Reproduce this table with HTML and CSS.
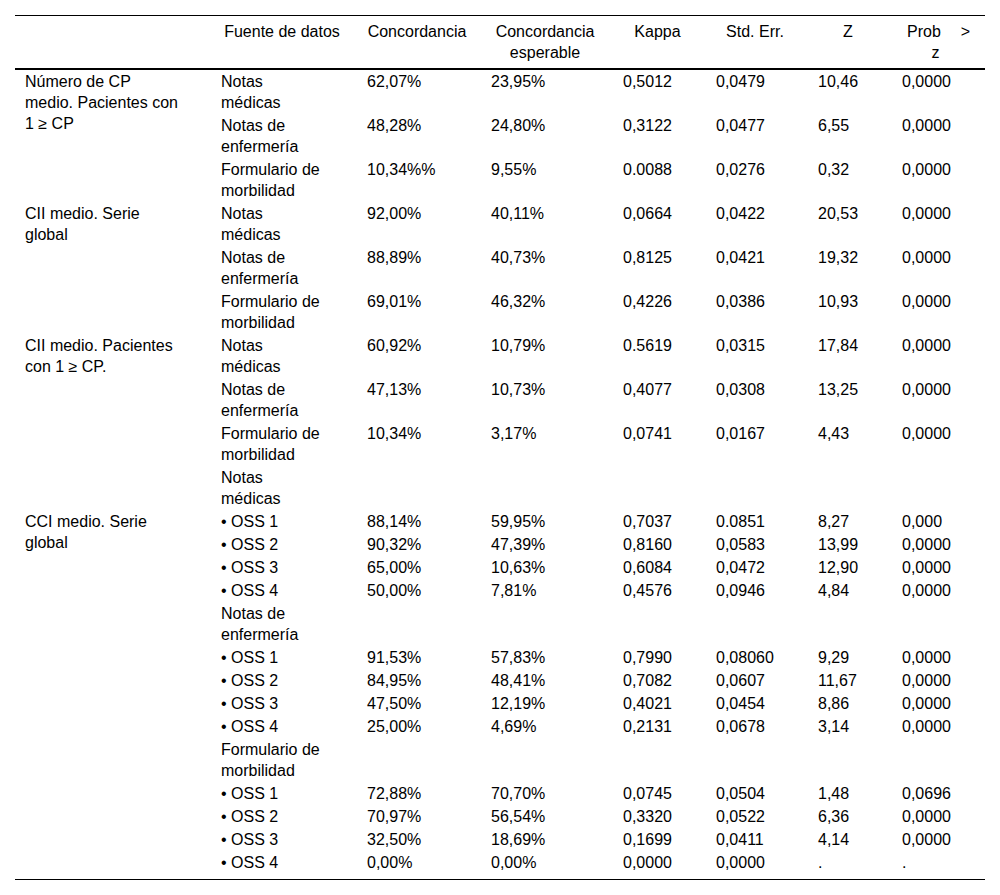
FILE: index.html
```html
<!DOCTYPE html>
<html lang="es">
<head>
<meta charset="utf-8">
<title>Tabla</title>
<link rel="stylesheet" href="styles.css">
</head>
<body>
<div class="page">
<table class="data">
<colgroup>
<col class="c1"><col class="c2"><col class="c3"><col class="c4"><col class="c5"><col class="c6"><col class="c7"><col class="c8">
</colgroup>
<thead>
<tr>
<th></th>
<th>Fuente de datos</th>
<th>Concordancia</th>
<th>Concordancia esperable</th>
<th>Kappa</th>
<th>Std. Err.</th>
<th>Z</th>
<th class="prob"><div class="prob-top"><span>Prob</span><span>&gt;</span></div><div class="prob-z">z</div></th>
</tr>
</thead>
<tbody>
<tr><td class="lab" rowspan="3">Número de CP medio. Pacientes con 1 ≥ CP</td><td class="src">Notas médicas</td><td>62,07%</td><td>23,95%</td><td>0,5012</td><td>0,0479</td><td>10,46</td><td>0,0000</td></tr>
<tr><td class="src">Notas de enfermería</td><td>48,28%</td><td>24,80%</td><td>0,3122</td><td>0,0477</td><td>6,55</td><td>0,0000</td></tr>
<tr><td class="src">Formulario de morbilidad</td><td>10,34%%</td><td>9,55%</td><td>0.0088</td><td>0,0276</td><td>0,32</td><td>0,0000</td></tr>

<tr><td class="lab" rowspan="3">CII medio. Serie global</td><td class="src">Notas médicas</td><td>92,00%</td><td>40,11%</td><td>0,0664</td><td>0,0422</td><td>20,53</td><td>0,0000</td></tr>
<tr><td class="src">Notas de enfermería</td><td>88,89%</td><td>40,73%</td><td>0,8125</td><td>0,0421</td><td>19,32</td><td>0,0000</td></tr>
<tr><td class="src">Formulario de morbilidad</td><td>69,01%</td><td>46,32%</td><td>0,4226</td><td>0,0386</td><td>10,93</td><td>0,0000</td></tr>

<tr><td class="lab" rowspan="3">CII medio. Pacientes con 1 ≥ CP.</td><td class="src">Notas médicas</td><td>60,92%</td><td>10,79%</td><td>0.5619</td><td>0,0315</td><td>17,84</td><td>0,0000</td></tr>
<tr><td class="src">Notas de enfermería</td><td>47,13%</td><td>10,73%</td><td>0,4077</td><td>0,0308</td><td>13,25</td><td>0,0000</td></tr>
<tr><td class="src">Formulario de morbilidad</td><td>10,34%</td><td>3,17%</td><td>0,0741</td><td>0,0167</td><td>4,43</td><td>0,0000</td></tr>

<tr><td class="lab"></td><td class="src">Notas médicas</td><td></td><td></td><td></td><td></td><td></td><td></td></tr>
<tr><td class="lab" rowspan="14">CCI medio. Serie global</td><td class="src">• OSS 1</td><td>88,14%</td><td>59,95%</td><td>0,7037</td><td>0.0851</td><td>8,27</td><td>0,000</td></tr>
<tr><td class="src">• OSS 2</td><td>90,32%</td><td>47,39%</td><td>0,8160</td><td>0,0583</td><td>13,99</td><td>0,0000</td></tr>
<tr><td class="src">• OSS 3</td><td>65,00%</td><td>10,63%</td><td>0,6084</td><td>0,0472</td><td>12,90</td><td>0,0000</td></tr>
<tr><td class="src">• OSS 4</td><td>50,00%</td><td>7,81%</td><td>0,4576</td><td>0,0946</td><td>4,84</td><td>0,0000</td></tr>
<tr><td class="src">Notas de enfermería</td><td></td><td></td><td></td><td></td><td></td><td></td></tr>
<tr><td class="src">• OSS 1</td><td>91,53%</td><td>57,83%</td><td>0,7990</td><td>0,08060</td><td>9,29</td><td>0,0000</td></tr>
<tr><td class="src">• OSS 2</td><td>84,95%</td><td>48,41%</td><td>0,7082</td><td>0,0607</td><td>11,67</td><td>0,0000</td></tr>
<tr><td class="src">• OSS 3</td><td>47,50%</td><td>12,19%</td><td>0,4021</td><td>0,0454</td><td>8,86</td><td>0,0000</td></tr>
<tr><td class="src">• OSS 4</td><td>25,00%</td><td>4,69%</td><td>0,2131</td><td>0,0678</td><td>3,14</td><td>0,0000</td></tr>
<tr><td class="src">Formulario de morbilidad</td><td></td><td></td><td></td><td></td><td></td><td></td></tr>
<tr><td class="src">• OSS 1</td><td>72,88%</td><td>70,70%</td><td>0,0745</td><td>0,0504</td><td>1,48</td><td>0,0696</td></tr>
<tr><td class="src">• OSS 2</td><td>70,97%</td><td>56,54%</td><td>0,3320</td><td>0,0522</td><td>6,36</td><td>0,0000</td></tr>
<tr><td class="src">• OSS 3</td><td>32,50%</td><td>18,69%</td><td>0,1699</td><td>0,0411</td><td>4,14</td><td>0,0000</td></tr>
<tr class="last"><td class="src">• OSS 4</td><td>0,00%</td><td>0,00%</td><td>0,0000</td><td>0,0000</td><td>.</td><td>.</td></tr>
</tbody>
</table>
</div>
</body>
</html>
```

FILE: styles.css
```css
html, body {
  margin: 0;
  padding: 0;
  background: #ffffff;
}

.page {
  padding: 15px 15px 0 15px;
  font-family: "Liberation Sans", Arial, sans-serif;
  font-size: 16px;
  line-height: 21px;
  color: #000000;
}

.data {
  width: 970px;
  table-layout: fixed;
  border-collapse: collapse;
  border-top: 1px solid #000;
  border-bottom: 1px solid #000;
}

.c1 { width: 196px; }
.c2 { width: 146px; }
.c3 { width: 124px; }
.c4 { width: 132px; }
.c5 { width: 93px; }
.c6 { width: 102px; }
.c7 { width: 84px; }
.c8 { width: 93px; }

.data thead tr {
  border-bottom: 2px solid #000;
}

.data th {
  font-weight: normal;
  text-align: center;
  vertical-align: top;
  padding: 5px 14px 5px 10px;
}

.data th.prob {
  padding: 5px 15px 5px 15px;
}

.prob-top {
  display: flex;
  justify-content: space-between;
}

.prob-z {
  text-align: center;
  padding-right: 6px;
}

.data td {
  text-align: left;
  vertical-align: top;
  padding: 1px 10px 1px 10px;
  white-space: nowrap;
}

.data td.lab {
  white-space: normal;
  padding-right: 30px;
}

.data td.src {
  white-space: normal;
  padding-right: 34px;
}

.data tr.last td {
  padding-bottom: 6px;
}
```
